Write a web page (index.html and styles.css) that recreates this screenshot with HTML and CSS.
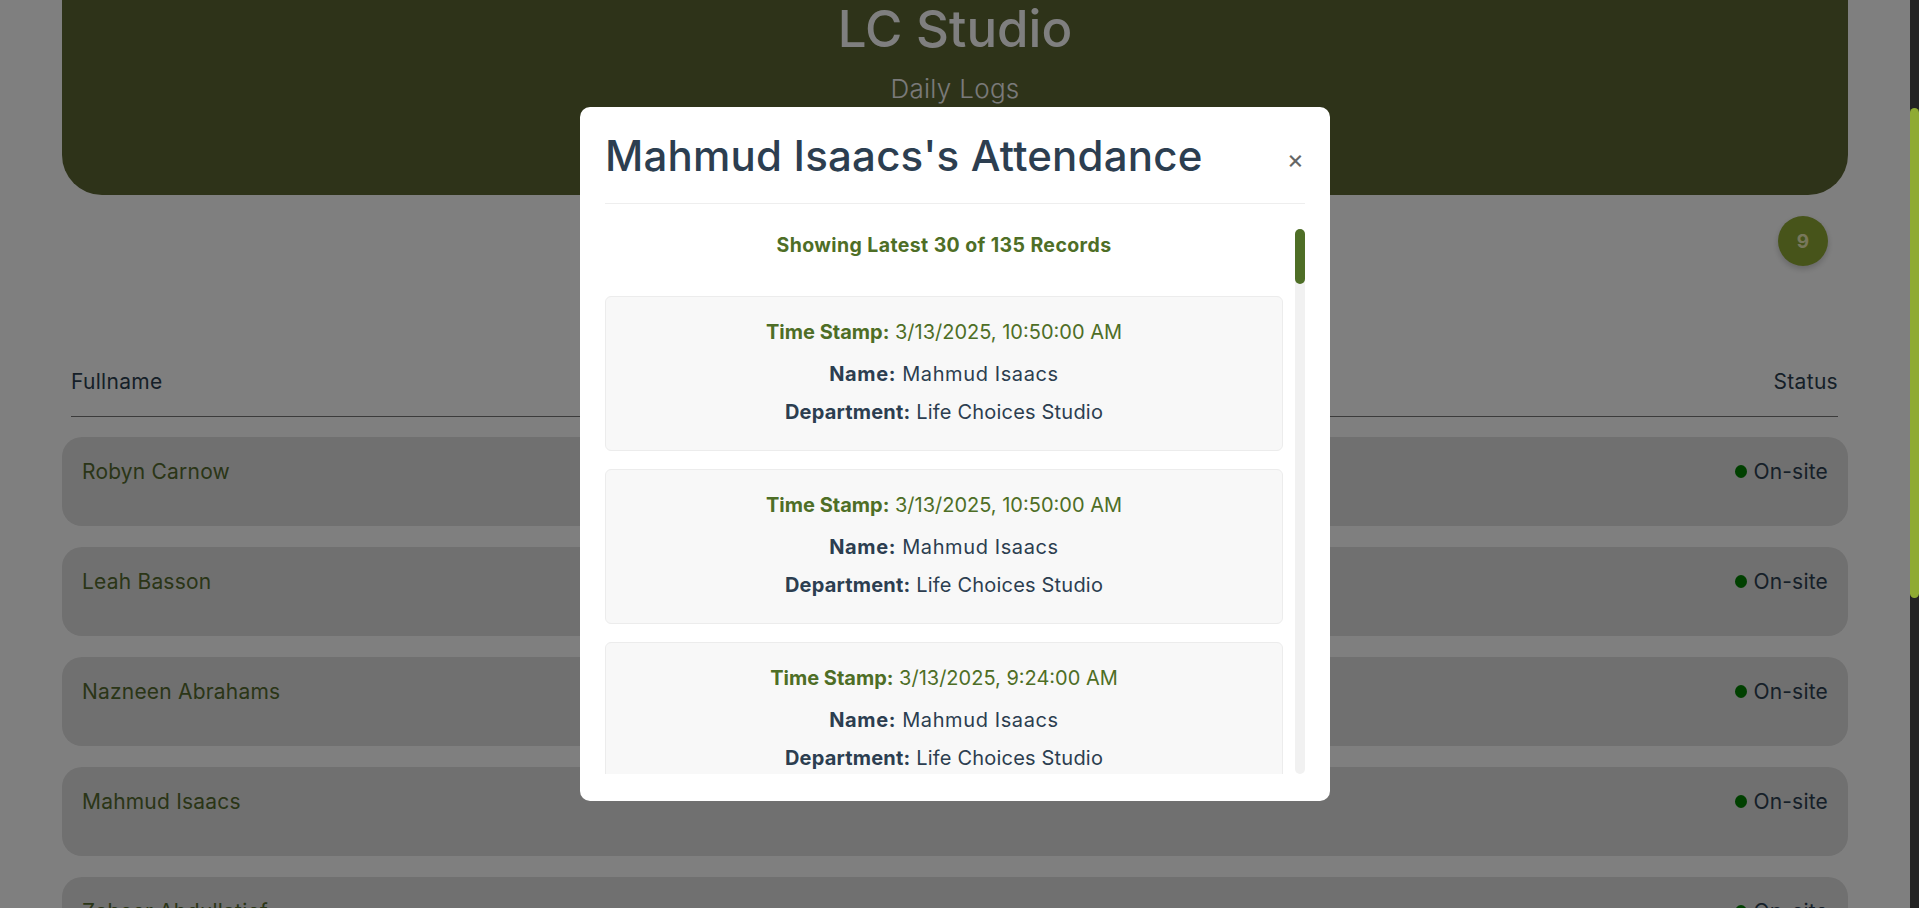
FILE: index.html
```html
<!DOCTYPE html>
<html lang="en">
<head>
<meta charset="utf-8">
<title>LC Studio - Daily Logs</title>
<link rel="stylesheet" href="styles.css">
</head>
<body>
<div class="page">
  <header class="hero">
    <h1 class="hero-title">LC Studio</h1>
    <p class="hero-subtitle">Daily Logs</p>
  </header>

  <div class="toolbar">
    <span class="count-badge">9</span>
  </div>

  <section class="log-table">
    <div class="log-head">
      <span>Fullname</span>
      <span>Status</span>
    </div>
    <div class="log-row"><span class="log-name">Robyn Carnow</span><span class="log-status"><i class="dot"></i>On-site</span></div>
    <div class="log-row"><span class="log-name">Leah Basson</span><span class="log-status"><i class="dot"></i>On-site</span></div>
    <div class="log-row"><span class="log-name">Nazneen Abrahams</span><span class="log-status"><i class="dot"></i>On-site</span></div>
    <div class="log-row"><span class="log-name">Mahmud Isaacs</span><span class="log-status"><i class="dot"></i>On-site</span></div>
    <div class="log-row"><span class="log-name">Zaheer Abdullatief</span><span class="log-status"><i class="dot"></i>On-site</span></div>
    <div class="log-row"><span class="log-name">Ashley Williams</span><span class="log-status"><i class="dot"></i>On-site</span></div>
    <div class="log-row"><span class="log-name">Ruan Jacobs</span><span class="log-status"><i class="dot"></i>On-site</span></div>
    <div class="log-row"><span class="log-name">Thabo Mokoena</span><span class="log-status"><i class="dot"></i>On-site</span></div>
    <div class="log-row"><span class="log-name">Candice Petersen</span><span class="log-status"><i class="dot"></i>On-site</span></div>
  </section>
</div>

<div class="overlay">
  <div class="modal">
    <div class="modal-header">
      <h2 class="modal-title">Mahmud Isaacs's Attendance</h2>
      <button class="modal-close" type="button">×</button>
    </div>
    <div class="modal-main">
      <div class="modal-body">
        <p class="summary">Showing Latest 30 of 135 Records</p>

        <div class="record"><p class="rec-time"><b>Time Stamp:</b> 3/13/2025, 10:50:00 AM</p><p class="rec-name"><b>Name:</b> Mahmud Isaacs</p><p><b>Department:</b> Life Choices Studio</p></div>
        <div class="record"><p class="rec-time"><b>Time Stamp:</b> 3/13/2025, 10:50:00 AM</p><p class="rec-name"><b>Name:</b> Mahmud Isaacs</p><p><b>Department:</b> Life Choices Studio</p></div>
        <div class="record"><p class="rec-time"><b>Time Stamp:</b> 3/13/2025, 9:24:00 AM</p><p class="rec-name"><b>Name:</b> Mahmud Isaacs</p><p><b>Department:</b> Life Choices Studio</p></div>
        <div class="record"><p class="rec-time"><b>Time Stamp:</b> 3/12/2025, 4:32:00 PM</p><p class="rec-name"><b>Name:</b> Mahmud Isaacs</p><p><b>Department:</b> Life Choices Studio</p></div>
        <div class="record"><p class="rec-time"><b>Time Stamp:</b> 3/12/2025, 8:57:00 AM</p><p class="rec-name"><b>Name:</b> Mahmud Isaacs</p><p><b>Department:</b> Life Choices Studio</p></div>
        <div class="record"><p class="rec-time"><b>Time Stamp:</b> 3/11/2025, 4:45:00 PM</p><p class="rec-name"><b>Name:</b> Mahmud Isaacs</p><p><b>Department:</b> Life Choices Studio</p></div>
        <div class="record"><p class="rec-time"><b>Time Stamp:</b> 3/11/2025, 9:02:00 AM</p><p class="rec-name"><b>Name:</b> Mahmud Isaacs</p><p><b>Department:</b> Life Choices Studio</p></div>
        <div class="record"><p class="rec-time"><b>Time Stamp:</b> 3/10/2025, 4:30:00 PM</p><p class="rec-name"><b>Name:</b> Mahmud Isaacs</p><p><b>Department:</b> Life Choices Studio</p></div>
        <div class="record"><p class="rec-time"><b>Time Stamp:</b> 3/10/2025, 8:49:00 AM</p><p class="rec-name"><b>Name:</b> Mahmud Isaacs</p><p><b>Department:</b> Life Choices Studio</p></div>
        <div class="record"><p class="rec-time"><b>Time Stamp:</b> 3/7/2025, 3:58:00 PM</p><p class="rec-name"><b>Name:</b> Mahmud Isaacs</p><p><b>Department:</b> Life Choices Studio</p></div>
      </div>
      <div class="scroll-track"><div class="scroll-thumb"></div></div>
    </div>
  </div>
</div>

<div class="page-scrollbar"><div class="page-scrollbar-thumb"></div></div>
<script src="script.js"></script>
</body>
</html>
```

FILE: styles.css
```css
body {
  margin: 0;
  padding-right: 9px;
  background: #ffffff;
  font-family: "Inter", "Noto Sans", sans-serif;
  color: #2c3e50;
}

.page {
  padding: 0 62px 77px;
}

/* hero */
.hero {
  background: #5c6632;
  border-radius: 0 0 40px 40px;
  padding: 200px 20px 88px;
  text-align: center;
  color: #ffffff;
}
.hero-title {
  margin: 0;
  font-size: 51px;
  line-height: 58px;
  font-weight: 500;
}
.hero-subtitle {
  margin: 13px 0 0;
  font-size: 26px;
  line-height: 36px;
  font-weight: 300;
  letter-spacing: 0.3px;
  color: #f4f4f4;
}

/* toolbar */
.toolbar {
  display: flex;
  justify-content: flex-end;
  margin-top: 21px;
  padding-right: 20px;
}
.count-badge {
  width: 50px;
  height: 50px;
  border-radius: 50%;
  background: #8ea834;
  color: #f0efb8;
  font-weight: 700;
  font-size: 19px;
  display: flex;
  align-items: center;
  justify-content: center;
  box-shadow: 0 3px 6px rgba(0, 0, 0, 0.2);
}

/* table */
.log-table {
  margin-top: 102px;
}
.log-head {
  display: flex;
  justify-content: space-between;
  margin: 0 10px 20px 9px;
  padding-bottom: 21px;
  border-bottom: 1px solid #777777;
  font-size: 21px;
  line-height: 27px;
  letter-spacing: 0.3px;
  color: #2c3e50;
}
.log-row {
  display: flex;
  justify-content: space-between;
  align-items: flex-start;
  background: #e0e0e0;
  border-radius: 20px;
  padding: 21px 20px 41px;
  margin-bottom: 21px;
  font-size: 21px;
  line-height: 27px;
  letter-spacing: 0.2px;
}
.log-name {
  color: #556b2f;
}
.log-status {
  display: flex;
  align-items: center;
  gap: 6px;
  color: #2c3e50;
}
.dot {
  width: 12px;
  height: 13px;
  border-radius: 50%;
  background: #008000;
}

/* modal */
.overlay {
  position: fixed;
  top: 0;
  left: 0;
  bottom: 0;
  right: 9px;
  background: rgba(0, 0, 0, 0.5);
  display: flex;
  align-items: center;
  justify-content: center;
}
.modal {
  width: 750px;
  height: 694px;
  box-sizing: border-box;
  background: #ffffff;
  border-radius: 10px;
  padding: 25px 25px 27px;
  display: flex;
  flex-direction: column;
}
.modal-header {
  display: flex;
  align-items: center;
  justify-content: space-between;
  padding-bottom: 23px;
  border-bottom: 1px solid #eeeeee;
}
.modal-title {
  margin: 0;
  font-size: 42px;
  line-height: 48px;
  font-weight: 500;
  letter-spacing: 0.2px;
  color: #2c3e50;
}
.modal-close {
  border: none;
  background: none;
  padding: 0;
  margin: 6px 1px 0 0;
  font-family: inherit;
  font-size: 26px;
  line-height: 26px;
  color: #666666;
  cursor: pointer;
}
.modal-main {
  flex: 1;
  min-height: 0;
  margin-top: 25px;
  display: flex;
  gap: 12px;
}
.modal-body {
  flex: 1;
  min-width: 0;
  overflow: hidden;
}
.scroll-track {
  width: 10px;
  background: #f1f1f1;
  border-radius: 10px;
}
.scroll-thumb {
  height: 55px;
  background: #4e6e26;
  border-radius: 10px;
}
.summary {
  margin: 3px 0 38px;
  text-align: center;
  font-size: 19.5px;
  line-height: 26px;
  font-weight: 700;
  letter-spacing: 0.4px;
  color: #4e6e26;
}
.record {
  background: #f8f8f8;
  border: 1px solid #ececec;
  border-radius: 6px;
  padding: 22px 20px 24px;
  margin-bottom: 18px;
  text-align: center;
  font-size: 20px;
  line-height: 27px;
  letter-spacing: 0.2px;
  color: #2c3e50;
}
.record p {
  margin: 0 0 11px;
}
.record p:last-child {
  margin-bottom: 0;
}
.record .rec-time {
  margin-bottom: 15px;
  letter-spacing: 0;
  color: #4e6e26;
}
.record .rec-name {
  margin-bottom: 11px;
  letter-spacing: 0.6px;
}
.record b {
  font-weight: 700;
}

/* browser-style page scrollbar drawn over the right edge */
.page-scrollbar {
  position: fixed;
  top: 0;
  right: 0;
  bottom: 0;
  width: 9px;
  background: #232323;
}
.page-scrollbar-thumb {
  margin-top: 108px;
  height: 490px;
  background: #8fab33;
  border-radius: 5px;
}
```

FILE: script.js
```js
window.scrollTo(0, 200);
window.addEventListener('load', function () {
  window.scrollTo(0, 200);
});
```
